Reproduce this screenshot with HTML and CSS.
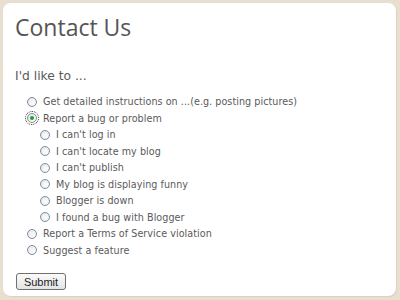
FILE: index.html
```html
<!DOCTYPE html>
<html lang="en">
<head>
    <meta charset="UTF-8">
    <title>Contact Us</title>
    <link rel="stylesheet" href="styles.css">
</head>
<body>
    <div class="card">
        <h1 class="title">Contact Us</h1>
        <form class="contact-form">
            <p class="prompt">I'd like to ...</p>
            <ul class="options">
                <li><label><input type="radio" name="topic"> Get detailed instructions on ...(e.g. posting pictures)</label></li>
                <li><label class="focused"><input type="radio" name="topic" checked> Report a bug or problem</label>
                    <ul class="options sub">
                        <li><label><input type="radio" name="bug"> I can't log in</label></li>
                        <li><label><input type="radio" name="bug"> I can't locate my blog</label></li>
                        <li><label><input type="radio" name="bug"> I can't publish</label></li>
                        <li><label><input type="radio" name="bug"> My blog is displaying funny</label></li>
                        <li><label><input type="radio" name="bug"> Blogger is down</label></li>
                        <li><label><input type="radio" name="bug"> I found a bug with Blogger</label></li>
                    </ul>
                </li>
                <li><label><input type="radio" name="topic"> Report a Terms of Service violation</label></li>
                <li><label><input type="radio" name="topic"> Suggest a feature</label></li>
            </ul>
            <button type="button" class="submit">Submit</button>
        </form>
    </div>
</body>
</html>
```

FILE: styles.css
```css
* {
    box-sizing: border-box;
}

body {
    margin: 0;
    background: #e8dfcf;
    width: 400px;
    height: 300px;
    padding: 3px 4px 4px 3px;
}

.card {
    height: 100%;
    background: #fff;
    border-radius: 8px;
    box-shadow: 1px 1px 0 #d9d2c6;
    padding: 10px 0 0 12px;
}

.title {
    margin: 0;
    font-family: "Open Sans", sans-serif;
    font-weight: normal;
    font-size: 23px;
    line-height: 28px;
    color: #555;
}

.prompt {
    margin: 28px 0 10px;
    font-family: "DejaVu Sans", sans-serif;
    font-size: 12.3px;
    line-height: 15px;
    color: #5a5a5a;
}

.options {
    list-style: none;
    margin: 0;
    padding: 0 0 0 12px;
    font-family: "DejaVu Sans", sans-serif;
    font-size: 9.6px;
    letter-spacing: 0.05px;
    color: #5a5a5a;
}

.options.sub {
    padding-left: 13px;
}

.options label {
    display: flex;
    align-items: center;
    height: 16.5px;
    line-height: 16.5px;
}

.options input {
    appearance: none;
    -webkit-appearance: none;
    flex: none;
    width: 10px;
    height: 10px;
    margin: 0 6px 1px 0;
    border: 1px solid #7f8fa0;
    border-radius: 50%;
    background: radial-gradient(circle at 60% 60%, #fff 0, #f4f4f4 40%, #dadada 100%);
    position: relative;
}

.options input:checked::after {
    content: "";
    position: absolute;
    left: 2px;
    top: 2px;
    width: 4px;
    height: 4px;
    border-radius: 50%;
    background: #21a121;
}

.focused input {
    outline: 1px dotted #333;
    outline-offset: 1px;
}

.submit {
    display: block;
    margin-top: 14px;
    margin-left: 1px;
    width: 50px;
    height: 17px;
    padding: 0;
    font-family: "Liberation Sans", Arial, sans-serif;
    font-size: 11px;
    color: #222;
    border: 1px solid #707070;
    border-radius: 3px;
    background: linear-gradient(#fafafa, #e4e4e4);
}
```
